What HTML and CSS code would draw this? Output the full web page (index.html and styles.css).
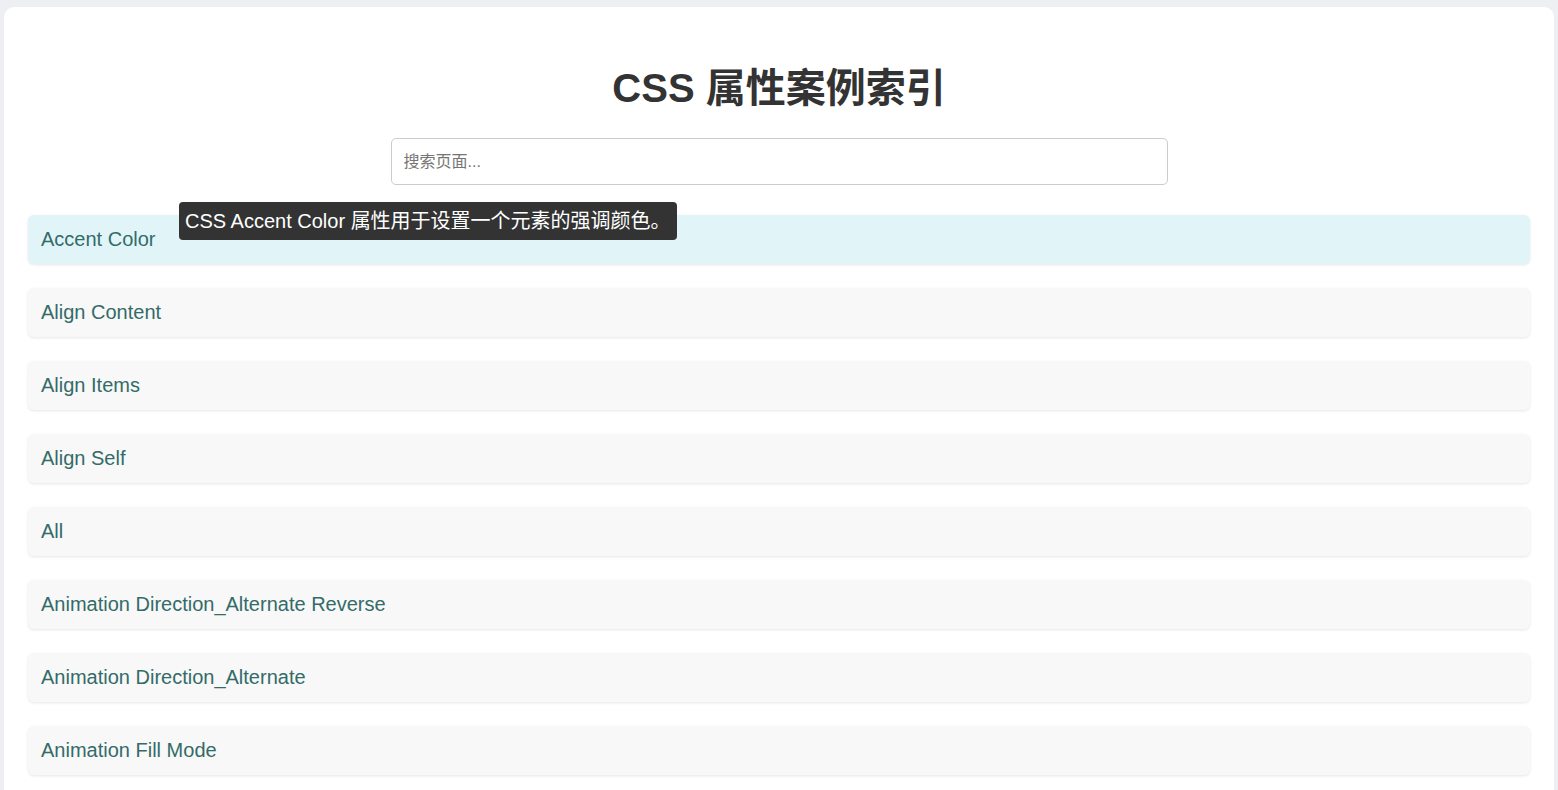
FILE: index.html
```html
<!DOCTYPE html>
<html lang="zh-CN">
<head>
<meta charset="utf-8">
<title>CSS 属性案例索引</title>
<link rel="stylesheet" href="styles.css">
</head>
<body>
<div class="container">
  <h1 class="title">CSS 属性案例索引</h1>
  <div class="search-wrap">
    <input class="search" type="text" placeholder="搜索页面...">
  </div>
  <ul class="list">
    <li class="item active">Accent Color<span class="tooltip">CSS Accent Color 属性用于设置一个元素的强调颜色。</span></li>
    <li class="item">Align Content</li>
    <li class="item">Align Items</li>
    <li class="item">Align Self</li>
    <li class="item">All</li>
    <li class="item">Animation Direction_Alternate Reverse</li>
    <li class="item">Animation Direction_Alternate</li>
    <li class="item">Animation Fill Mode</li>
  </ul>
</div>
</body>
</html>
```
FILE: styles.css
```css
html, body {
  margin: 0;
  height: 100%;
  overflow: hidden;
}
body {
  background: #eeeff3;
  padding: 7px 4px 0;
  box-sizing: border-box;
  font-family: "Liberation Sans", Arial, "Noto Sans CJK SC", sans-serif;
}
.container {
  background: #ffffff;
  border-radius: 10px;
  padding: 24px 24px 24px;
  min-height: 900px;
}
.title {
  margin: 34px 0 27px;
  font-size: 40px;
  line-height: 46px;
  font-weight: bold;
  color: #333333;
  text-align: center;
}
.search-wrap {
  display: flex;
  justify-content: center;
}
.search {
  width: 777px;
  height: 47px;
  box-sizing: border-box;
  padding: 0 12px;
  border: 1px solid #cccccc;
  border-radius: 5px;
  font-size: 16px;
  font-family: "Liberation Sans", Arial, "Noto Sans CJK SC", sans-serif;
  color: #333;
  outline: none;
}
.search::placeholder {
  color: #757575;
}
.list {
  list-style: none;
  margin: 30px 0 0;
  padding: 0;
  display: flex;
  flex-direction: column;
  gap: 24px;
}
.item {
  position: relative;
  background: #f8f8f8;
  border-radius: 6px;
  box-shadow: 0 1px 3px rgba(0, 0, 0, 0.1);
  padding: 12px 13px;
  font-size: 20px;
  line-height: 25px;
  color: #336b69;
}
.item.active {
  background: #e1f5f9;
}
.tooltip {
  position: absolute;
  left: 151px;
  top: -13px;
  background: #333333;
  color: #ffffff;
  border-radius: 4px;
  padding: 6px 6px;
  font-size: 20px;
  line-height: 26px;
  white-space: nowrap;
}
```
